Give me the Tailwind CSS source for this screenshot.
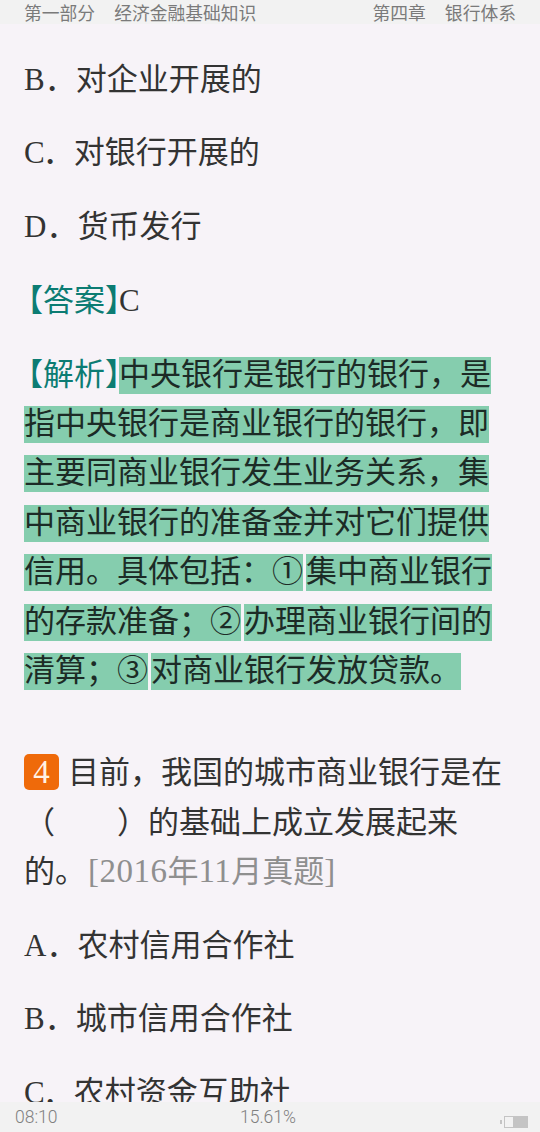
<!doctype html>
<html>
<head>
  <meta charset="UTF-8">
  <meta name="viewport" content="width=device-width, initial-scale=1.0">
  <title>银行体系</title>
  <script src="https://cdn.jsdelivr.net/npm/@tailwindcss/browser@4"></script>
</head>
<body class="bg-[#f7f3f8]">
  <div class="h-[1132px] w-[540px] flex flex-col overflow-hidden">
    <div class="h-6 shrink-0 bg-[#f2f2f2] pl-6 pr-6 flex justify-between items-center text-[17.8px] leading-6 text-[#7a7a7a] font-['Noto_Sans_CJK_SC',sans-serif]">
      <div class="flex gap-[19px]"><span>第一部分</span><span>经济金融基础知识</span></div>
      <div class="flex gap-[19px]"><span>第四章</span><span>银行体系</span></div>
    </div>
    <div class="flex-1 min-h-0 overflow-hidden pt-[31px] px-6 text-[31px] leading-[49.4px] text-[#333] font-['Liberation_Serif','Noto_Sans_CJK_SC',serif]">
      <p class="mb-6">B．对企业开展的</p>
      <p class="mb-6">C<span class="-ml-[2px]">．</span>对银行开展的</p>
      <p class="mb-[25px]">D．货币发行</p>
      <p class="mb-6"><span class="text-[#0c7c73]"><span class="-ml-[12px]">【</span>答案<span class="tracking-[-17px]">】</span></span>C</p>
      <p class="mb-[53px]">
        <span class="text-[#0c7c73]"><span class="-ml-[12px]">【</span>解析<span class="tracking-[-17px]">】</span></span><span class="bg-[#85cdae] text-[#1c2b26] pb-[2px]">中央银行是银行的银行，是指中央银行是商业银行的银行，即主要同商业银行发生业务关系，集中商业银行的准备金并对它们提供信用。具体包括：①</span><span class="bg-[#85cdae] text-[#1c2b26] pb-[2px] ml-[3px]">集中商业银行的存款准备；②</span><span class="bg-[#85cdae] text-[#1c2b26] pb-[2px] ml-[3px]">办理商业银行间的清算；③</span><span class="bg-[#85cdae] text-[#1c2b26] pb-[2px] ml-[3px]">对商业银行发放贷款。</span>
      </p>
      <p class="mb-6">
        <span class="inline-block align-[0px] w-[35px] h-9 leading-9 rounded-[5px] bg-[#ef6a0a] text-[#fff3e6] text-[33px] text-center mr-[9px]">4</span>目前，我国的城市商业银行是在（　　）的基础上成立发展起来的。<span class="text-[#8f8f8f] ml-[2px]"><span class="text-[33px] tracking-[0.5px]">[2016</span>年<span class="text-[33px] tracking-[0.5px]">11</span>月真题<span class="text-[33px]">]</span></span>
      </p>
      <p class="mb-6">A．农村信用合作社</p>
      <p class="mb-6">B．城市信用合作社</p>
      <p>C<span class="-ml-[2px]">．</span>农村资金互助社</p>
    </div>
    <div class="h-[30px] shrink-0 bg-[#f2f2f2] grid grid-cols-3 items-center pl-[15px] pr-3 text-[17.5px] font-light text-[#808080] font-['Roboto',sans-serif]">
      <span>08:10</span>
      <span class="justify-self-start ml-[54px]">15.61%</span>
      <div class="justify-self-end flex items-center mt-[10px]">
        <div class="w-[2px] h-1 bg-[#c4c4c4] mr-[2px]"></div>
        <div class="w-6 h-3 border border-[#c4c4c4] flex justify-end">
          <div class="w-[14px] bg-[#c4c4c4]"></div>
        </div>
      </div>
    </div>
  </div>
</body>
</html>
